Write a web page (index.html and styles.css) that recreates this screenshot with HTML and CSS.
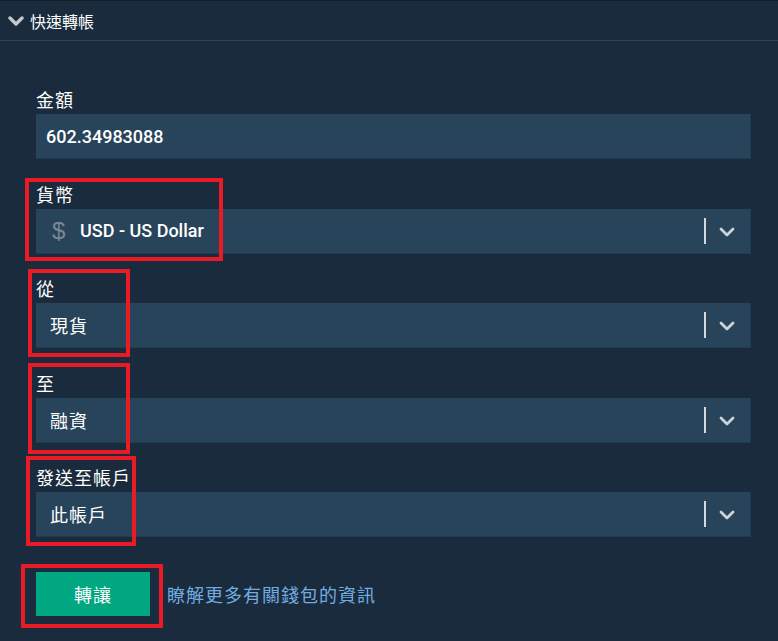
FILE: index.html
```html
<!DOCTYPE html>
<html lang="zh-Hant">
<head>
<meta charset="utf-8">
<link rel="stylesheet" href="styles.css">
</head>
<body>
<div class="panel">
  <div class="header">
    <svg class="hchev" width="16" height="12" viewBox="0 0 16 12"><path d="M2 3 L8 9 L14 3" fill="none" stroke="#c3c8cd" stroke-width="3.4" stroke-linecap="round" stroke-linejoin="round"/></svg>
    <span class="title">快速轉帳</span>
  </div>
  <div class="form">
    <div class="group">
      <div class="label">金額</div>
      <div class="field"><span class="num">602.34983088</span></div>
    </div>
    <div class="group">
      <div class="label">貨幣</div>
      <div class="field select">
        <span class="dollar">$</span><span class="val strong">USD - US Dollar</span>
        <span class="sep"></span>
        <svg class="chev" width="16" height="10" viewBox="0 0 16 10"><path d="M2 2 L8 8 L14 2" fill="none" stroke="#d0d3d6" stroke-width="2.8" stroke-linecap="round" stroke-linejoin="round"/></svg>
      </div>
    </div>
    <div class="group">
      <div class="label">從</div>
      <div class="field select">
        <span class="val">現貨</span>
        <span class="sep"></span>
        <svg class="chev" width="16" height="10" viewBox="0 0 16 10"><path d="M2 2 L8 8 L14 2" fill="none" stroke="#d0d3d6" stroke-width="2.8" stroke-linecap="round" stroke-linejoin="round"/></svg>
      </div>
    </div>
    <div class="group">
      <div class="label">至</div>
      <div class="field select">
        <span class="val">融資</span>
        <span class="sep"></span>
        <svg class="chev" width="16" height="10" viewBox="0 0 16 10"><path d="M2 2 L8 8 L14 2" fill="none" stroke="#d0d3d6" stroke-width="2.8" stroke-linecap="round" stroke-linejoin="round"/></svg>
      </div>
    </div>
    <div class="group">
      <div class="label">發送至帳戶</div>
      <div class="field select">
        <span class="val">此帳戶</span>
        <span class="sep"></span>
        <svg class="chev" width="16" height="10" viewBox="0 0 16 10"><path d="M2 2 L8 8 L14 2" fill="none" stroke="#d0d3d6" stroke-width="2.8" stroke-linecap="round" stroke-linejoin="round"/></svg>
      </div>
    </div>
    <div class="actions">
      <button class="btn">轉讓</button>
      <a class="link">瞭解更多有關錢包的資訊</a>
    </div>
  </div>
  <div class="mark m1"></div>
  <div class="mark m2"></div>
  <div class="mark m3"></div>
  <div class="mark m4"></div>
  <div class="mark m5"></div>
</div>
</body>
</html>
```
FILE: styles.css
```css
html, body {
  margin: 0;
  padding: 0;
  background: #192b3c;
}
body {
  font-family: Roboto, "Noto Sans CJK TC", sans-serif;
  color: #ffffff;
  width: 778px;
  height: 641px;
  overflow: hidden;
}
.panel {
  position: relative;
  height: 641px;
  border-top: 1px solid #121e28;
  box-sizing: border-box;
}
.header {
  height: 39px;
  display: flex;
  align-items: center;
  padding-left: 8px;
  border-bottom: 1px solid #33414e;
}
.hchev {
  margin-right: 6px;
  margin-top: 1px;
}
.title {
  font-family: "Noto Sans CJK TC", sans-serif;
  font-size: 16px;
  line-height: 20px;
}
.form {
  padding: 47px 27px 0 36px;
}
.group {
  margin-bottom: 23.5px;
}
.label {
  font-family: "Noto Sans CJK TC", sans-serif;
  font-size: 18px;
  letter-spacing: 1px;
  line-height: 22px;
  margin-bottom: 4px;
}
.field {
  height: 44px;
  background: #28445b;
  border-bottom: 1px solid #1f3b55;
  border-right: 1px solid #1f3b55;
  display: flex;
  align-items: center;
  padding-left: 10px;
  box-sizing: content-box;
}
.num {
  font-size: 18px;
  font-weight: 500;
}
.select {
  padding-left: 14px;
}
.dollar {
  font-family: "Liberation Sans", sans-serif;
  font-size: 24px;
  color: #7b8893;
  width: 16px;
  margin-left: 2px;
  margin-right: 12px;
}
.val {
  font-family: "Noto Sans CJK TC", sans-serif;
  font-size: 18px;
  letter-spacing: 1px;
  flex: 1;
}
.val.strong {
  font-family: Roboto, sans-serif;
  font-weight: 500;
  font-size: 18px;
  letter-spacing: 0;
}
.sep {
  width: 2px;
  height: 26px;
  background: #d6d9dc;
  margin-right: 13px;
}
.chev {
  margin-right: 15px;
  margin-top: 2px;
}
.actions {
  display: flex;
  align-items: center;
  margin-top: 35px;
}
.btn {
  width: 114px;
  height: 44px;
  border: 0;
  background: #01a780;
  color: #ffffff;
  font-family: "Noto Sans CJK TC", sans-serif;
  font-size: 18px;
  letter-spacing: 1px;
  padding: 0;
  margin-right: 17px;
}
.link {
  font-family: "Noto Sans CJK TC", sans-serif;
  font-size: 18px;
  letter-spacing: 1px;
  color: #72abe0;
}
.mark {
  position: absolute;
  border: 4px solid #ea1b24;
  box-sizing: border-box;
}
.m1 { left: 25px; top: 177px; width: 198px; height: 83px; }
.m2 { left: 28px; top: 268px; width: 102px; height: 88px; }
.m3 { left: 28px; top: 362px; width: 102px; height: 91px; }
.m4 { left: 26px; top: 455px; width: 110px; height: 90px; }
.m5 { left: 21px; top: 563px; width: 142px; height: 64px; }
```
